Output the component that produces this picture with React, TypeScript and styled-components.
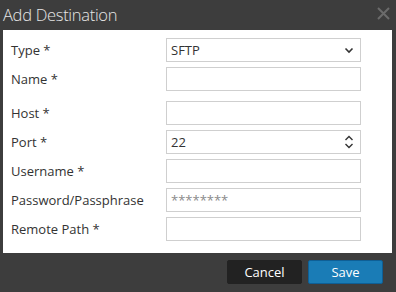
import React from 'react'
import styled, { createGlobalStyle } from 'styled-components'

const GlobalStyle = createGlobalStyle`
  html, body {
    margin: 0;
    padding: 0;
    background: #3d3d3d;
    font-family: "Open Sans", "Liberation Sans", sans-serif;
  }
`

const Dialog = styled.div`
  width: 396px;
  height: 292px;
  background: #3d3d3d;
  display: flex;
  flex-direction: column;
  box-sizing: border-box;
`

const Header = styled.div`
  height: 30px;
  display: flex;
  align-items: center;
  justify-content: space-between;
  padding: 0 5px 0 3px;
`

const Title = styled.h1`
  margin: 0;
  font-size: 16.5px;
  font-weight: 300;
  color: #e6e6e6;
  letter-spacing: -0.3px;
  line-height: 28px;
`

const CloseButton = styled.button`
  border: none;
  background: none;
  padding: 0;
  width: 14px;
  height: 14px;
  display: flex;
  margin-top: -3px;
`

const Body = styled.div`
  margin: 0 4px 0 3px;
  background: #fff;
  padding: 8px 0 12px 8px;
  display: flex;
  flex-direction: column;
`

const Row = styled.div<{ $gap?: number }>`
  display: grid;
  grid-template-columns: 155px 195px;
  align-items: center;
  height: 24px;
  margin-bottom: ${({ $gap }) => ($gap ?? 5)}px;
`

const Label = styled.label`
  font-size: 13px;
  color: #333;
`

const Field = styled.div`
  height: 24px;
  box-sizing: border-box;
  border: 1px solid #cfcfcf;
  display: flex;
  align-items: center;
  justify-content: space-between;
  padding: 0 6px 0 4px;
  font-size: 13px;
  color: #333;
`

const Masked = styled.span`
  color: #8a8a8a;
  font-size: 13px;
`

const Footer = styled.div`
  display: flex;
  justify-content: flex-end;
  gap: 6px;
  padding: 7px 13px 0 0;
`

const Button = styled.button<{ $primary?: boolean }>`
  width: 75px;
  height: 24px;
  box-sizing: border-box;
  font-family: "Open Sans", "Liberation Sans", sans-serif;
  font-size: 13px;
  color: #fff;
  border-radius: 2px;
  border: 1px solid ${({ $primary }) => ($primary ? '#0e5f96' : '#222')};
  background: ${({ $primary }) => ($primary ? '#1a7cb6' : '#222')};
  padding: 0;
`

const Chevron = () => (
  <svg width="10" height="7" viewBox="0 0 10 7">
    <path d="M1.5 1.5 L5 5 L8.5 1.5" fill="none" stroke="#333" strokeWidth="1.6" />
  </svg>
)

const Spinner = () => (
  <svg width="10" height="14" viewBox="0 0 10 14">
    <path d="M1.5 5 L5 1.5 L8.5 5" fill="none" stroke="#333" strokeWidth="1.4" />
    <path d="M1.5 9 L5 12.5 L8.5 9" fill="none" stroke="#333" strokeWidth="1.4" />
  </svg>
)

const App = () => {
  return (
    <Dialog>
      <GlobalStyle />
      <Header>
        <Title>Add Destination</Title>
        <CloseButton>
          <svg width="13" height="13" viewBox="0 0 13 13">
            <path d="M1 1 L12 12 M12 1 L1 12" stroke="#6b6b6b" strokeWidth="2" />
          </svg>
        </CloseButton>
      </Header>
      <Body>
        <Row>
          <Label>Type *</Label>
          <Field>SFTP<Chevron /></Field>
        </Row>
        <Row $gap={10}>
          <Label>Name *</Label>
          <Field />
        </Row>
        <Row>
          <Label>Host *</Label>
          <Field />
        </Row>
        <Row>
          <Label>Port *</Label>
          <Field>22<Spinner /></Field>
        </Row>
        <Row>
          <Label>Username *</Label>
          <Field />
        </Row>
        <Row>
          <Label>Password/Passphrase</Label>
          <Field><Masked>********</Masked></Field>
        </Row>
        <Row $gap={0}>
          <Label>Remote Path *</Label>
          <Field />
        </Row>
      </Body>
      <Footer>
        <Button>Cancel</Button>
        <Button $primary>Save</Button>
      </Footer>
    </Dialog>
  )
}

export default App
